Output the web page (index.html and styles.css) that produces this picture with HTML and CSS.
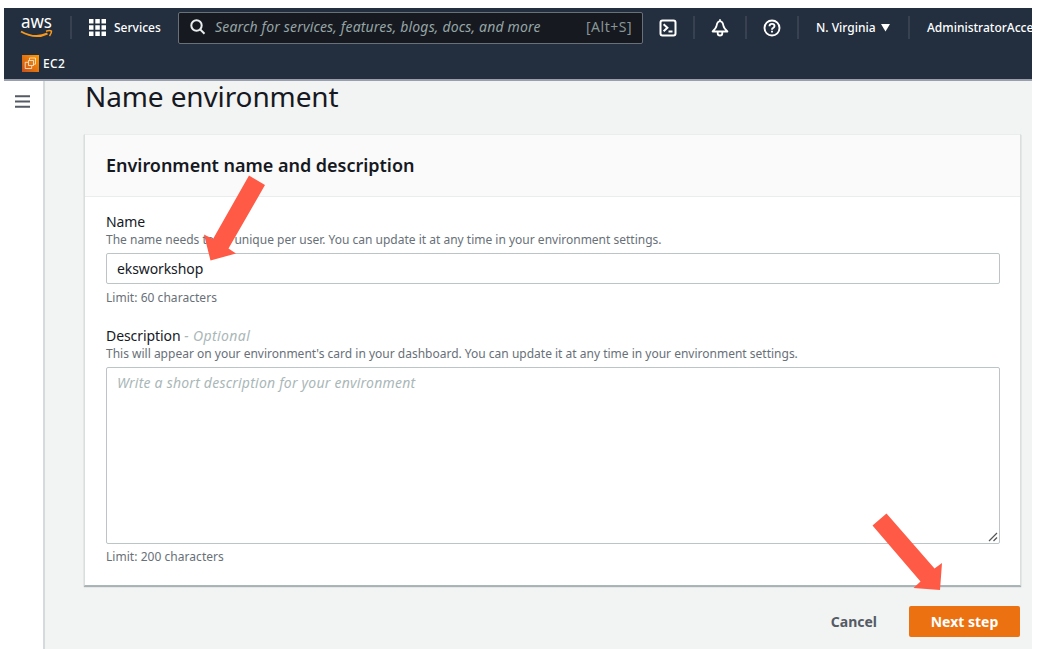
FILE: index.html
```html
<!DOCTYPE html>
<html lang="en">
<head>
<meta charset="utf-8">
<title>Name environment</title>
<link rel="stylesheet" href="styles.css">
</head>
<body>
<div class="app">
  <header class="topnav">
    <div class="nav-row">
      <svg class="logo" width="34" height="28" viewBox="0 -2 34 28">
        <text class="logo-text" x="1" y="12" textLength="31" lengthAdjust="spacingAndGlyphs">aws</text>
        <path d="M1 15.500Q15 23.500 27.500 17.500" fill="none" stroke="#f7981d" stroke-width="2"/>
        <path d="M26 15.200Q30 14 31.500 15.200Q31.800 17 29.500 20" fill="none" stroke="#f7981d" stroke-width="1.500"/>
      </svg>
      <span class="divider first"></span>
      <svg class="grid-icon" width="17" height="17" viewBox="0 0 17 17" fill="#fff">
        <path d="M0 0h4.500v4.500H0zM6.300 0h4.500v4.500H6.300zM12.500 0H17v4.500h-4.500zM0 6.300h4.500v4.500H0zM6.300 6.300h4.500v4.500H6.300zM12.500 6.300H17v4.500h-4.500zM0 12.500h4.500V17H0zM6.300 12.500h4.500V17H6.300zM12.500 12.500H17V17h-4.500z"/>
      </svg>
      <span class="services">Services</span>
      <div class="search">
        <svg width="16" height="16" viewBox="0 0 16 16" fill="none" stroke="#eaeded" stroke-width="2">
          <circle cx="6.500" cy="6.500" r="5.200"/><path d="M10 10.200l4.500 4.600"/>
        </svg>
        <span class="search-text">Search for services, features, blogs, docs, and more</span>
        <span class="shortcut">[Alt+S]</span>
      </div>
      <div class="icon-cell">
        <svg width="18" height="18" viewBox="0 0 18 18" fill="none" stroke="#fff" stroke-width="2">
          <rect x="1.500" y="1.500" width="15" height="15" rx="2"/><path d="M4.600 5.300L8.400 8.700l-3.800 3.500M9.500 12.500h4"/>
        </svg>
      </div>
      <div class="icon-cell">
        <svg width="18" height="18" viewBox="0 0 18 18" fill="none" stroke="#fff" stroke-width="1.800" stroke-linejoin="round">
          <path d="M9 2.200C6.800 2.500 6 4.300 5.600 6.700 5.200 9 3.500 10.700 1.600 12.500h14.800C14.500 10.700 12.800 9 12.400 6.700 12 4.300 11.200 2.500 9 2.200zM9 .3v2M6.700 12.500v1.700Q6.700 16.500 9 16.500t2.300-2.300v-1.700"/>
        </svg>
      </div>
      <div class="icon-cell">
        <svg width="18" height="18" viewBox="0 0 18 18" fill="none" stroke="#fff" stroke-width="1.900">
          <circle cx="9" cy="9" r="7.500"/><path d="M6.500 7.300Q6.500 4.900 9 4.900t2.500 2.200Q11.500 8.200 10.200 8.800 9 9.300 9 10.800M9 11.800v1.800"/>
        </svg>
      </div>
      <div class="region"><span class="region-name">N. Virginia</span>
        <svg width="9" height="8" viewBox="0 0 9 8"><path d="M0 0h9L4.500 7.500z" fill="#fff"/></svg>
      </div>
      <span class="account">AdministratorAcce</span>
    </div>
    <div class="fav-row">
      <svg width="17" height="17" viewBox="0 0 17 17">
        <defs><linearGradient id="ec2" x1="0" y1="1" x2="1" y2="0"><stop stop-color="#c8511b"/><stop offset="1" stop-color="#f90"/></linearGradient></defs>
        <path d="M0 0h17v17H0z" fill="url(#ec2)"/>
        <path d="M6.500 5.500h5v5h-5zM7.500 5V3h6v6.200h-2M6 7.300H3.200v6.200h6.500V11" fill="none" stroke="#fff" stroke-width=".7"/>
      </svg>
      <span class="ec2">EC2</span>
    </div>
  </header>
  <div class="body">
    <aside class="side">
      <svg width="15" height="13" viewBox="0 0 15 13" stroke="#545b64" stroke-width="1.900"><path d="M0 1.200h15M0 6.500h15M0 11.800h15"/></svg>
    </aside>
    <main class="main">
      <h1 class="title">Name environment</h1>
      <section class="card">
        <div class="card-head"><h2 class="card-title">Environment name and description</h2></div>
        <div class="card-body">
          <div class="label">Name</div>
          <div class="hint">The name needs to be unique per user. You can update it at any time in your environment settings.</div>
          <div class="field input">eksworkshop</div>
          <div class="limit">Limit: 60 characters</div>
          <div class="label second">Description <i class="optional">- Optional</i></div>
          <div class="hint">This will appear on your environment's card in your dashboard. You can update it at any time in your environment settings.</div>
          <div class="field area"><span class="placeholder">Write a short description for your environment</span>
            <svg class="grip" width="10" height="10" viewBox="0 0 10 10" stroke="#555" stroke-width="1.200"><path d="M1 9L9 1M5.500 9L9 5.500"/></svg>
          </div>
          <div class="limit">Limit: 200 characters</div>
        </div>
      </section>
      <div class="actions"><span class="cancel">Cancel</span><span class="next">Next step</span></div>
    </main>
  </div>
</div>
<svg class="arrows" width="1038" height="649" viewBox="0 0 1038 649" fill="#ff5a46">
  <path d="M249 175.500L265 185 228.500 248.500 236 253.500 210.500 260.500 204 234.500 213 239z"/>
  <path d="M886.500 513.500L934.500 568.500 942 563 940 590 913.500 588 920.500 581.500 872.500 525.500z"/>
</svg>
</body>
</html>
```
FILE: styles.css
```css
* { box-sizing: border-box; }
body { margin: 0; background: #fff; font-family: "Noto Sans", sans-serif; overflow: hidden; }
h1, h2 { margin: 0; }
.app { width: 1028px; height: 641px; margin: 8px 0 0 4px; overflow: hidden; display: flex; flex-direction: column; white-space: nowrap; }
.topnav { height: 73px; flex: none; background: #232f3e; border-bottom: 2px solid #9a9fae; color: #fff; }
.nav-row { height: 39px; display: flex; align-items: center; }
.logo { margin-left: 16px; flex: none; overflow: visible; }
.logo-text { font: 400 18px "Noto Sans", sans-serif; fill: #fff; }
.divider { width: 2px; height: 23px; background: #37414f; flex: none; }
.first { margin-left: 16px; }
.grid-icon { margin-left: 17px; flex: none; }
.services { margin-left: 8px; width: 64px; flex: none; font-size: 12px; font-weight: 500; }
.search { width: 465px; height: 32px; border: 1px solid #687078; border-radius: 2px; background: #16191f; display: flex; align-items: center; padding: 0 10px 2px 11px; flex: none; }
.search-text { margin-left: 9px; font-size: 14px; font-style: italic; letter-spacing: .17px; color: #95a5a6; flex: 1; }
.shortcut { font-size: 14px; letter-spacing: .5px; color: #879596; }
.icon-cell { width: 52px; height: 23px; display: flex; align-items: center; justify-content: center; border-right: 2px solid #37414f; flex: none; }
.region { width: 111px; height: 23px; border-right: 2px solid #37414f; flex: none; display: flex; align-items: center; padding-left: 17px; gap: 5px; }
.region-name, .account { font-size: 12px; font-weight: 500; }
.account { margin-left: 17px; }
.fav-row { height: 32px; display: flex; align-items: center; padding-left: 18px; gap: 4px; }
.ec2 { font-size: 12px; font-weight: 500; letter-spacing: .3px; }
.body { flex: 1; display: flex; min-height: 0; }
.side { width: 41px; background: #fff; border-right: 2px solid #d5dbdb; padding: 10px 0 0 11px; flex: none; }
.main { flex: 1; background: #f2f3f3; padding: 0 11px 0 39px; min-width: 0; }
.title { height: 53px; font-size: 28px; line-height: 30px; letter-spacing: -.12px; padding-left: 1px; font-weight: 400; color: #16191f; }
.card { height: 452px; background: #fff; border: 1px solid #d9dede; border-top-color: #eaeded; border-bottom-color: #aab7b8; box-shadow: 0 1px 1px rgba(0,28,36,.3); }
.card-head { height: 62px; background: #fafafa; border-bottom: 1px solid #eaeded; padding: 16px 21px; }
.card-title { font-size: 18px; line-height: 28px; letter-spacing: -.02px; font-weight: 600; color: #16191f; }
.card-body { padding: 15px 20px 0 21px; }
.label { font-size: 14px; line-height: 19px; letter-spacing: -.07px; color: #16191f; }
.hint, .limit { font-size: 12px; line-height: 17px; color: #687078; }
.limit { letter-spacing: .04px; }
.field { border: 1px solid #bcc5c5; border-radius: 2px; background: #fff; font-size: 14px; color: #16191f; padding: 0 10px; }
.input { height: 31px; line-height: 29px; letter-spacing: -.1px; margin: 5px 0; }
.second { margin-top: 20px; }
.optional, .placeholder { color: #aab7b8; font-style: italic; letter-spacing: .22px; }
.optional { letter-spacing: .4px; }
.area { height: 177px; margin: 5px 0 4px; line-height: 30px; position: relative; }
.grip { position: absolute; right: 1px; bottom: 1px; }
.actions { display: flex; justify-content: flex-end; align-items: center; margin: 19px 1px 0 0; height: 32px; }
.cancel { font-size: 14px; font-weight: 700; color: #545b64; margin-right: 32px; }
.next { width: 111px; height: 31px; border-radius: 2px; background: #ec7211; color: #fff; font-size: 14px; font-weight: 700; line-height: 31px; text-align: center; }
.arrows { position: absolute; left: 0; top: 0; }
```
